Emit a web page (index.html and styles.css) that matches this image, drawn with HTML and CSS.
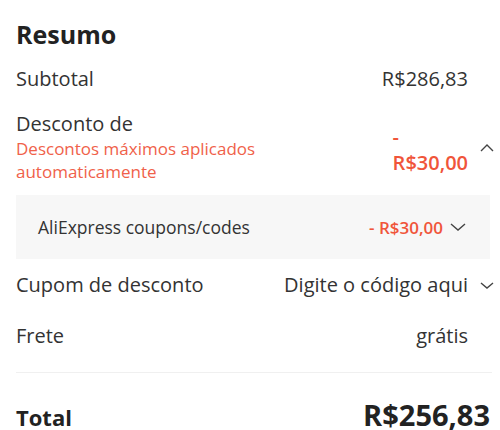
FILE: index.html
```html
<!DOCTYPE html>
<html lang="pt-BR">
<head>
    <meta charset="UTF-8">
    <title>Resumo</title>
    <link rel="stylesheet" href="styles.css">
</head>
<body>
    <div class="summary">
        <h2 class="title">Resumo</h2>

        <div class="row">
            <span class="label">Subtotal</span>
            <span class="value">R$286,83</span>
        </div>

        <div class="row discount">
            <div class="label">
                Desconto de
                <div class="hint">Descontos máximos aplicados automaticamente</div>
            </div>
            <div class="value red big">
                <span>-</span>
                <span>R$30,00</span>
            </div>
            <svg class="chev up" viewBox="0 0 14 8"><path d="M1 7L7 1L13 7"/></svg>
        </div>

        <!-- cupons aplicados -->
        <div class="coupons">
            <span class="label">AliExpress coupons/codes</span>
            <span class="value red">- R$30,00</span>
            <svg class="chev" viewBox="0 0 16 8"><path d="M1 1L8 7L15 1"/></svg>
        </div>

        <div class="row">
            <span class="label">Cupom de desconto</span>
            <span class="value">Digite o código aqui</span>
            <svg class="chev small" viewBox="0 0 14 7"><path d="M1 1L7 6L13 1"/></svg>
        </div>

        <div class="row">
            <span class="label">Frete</span>
            <span class="value">grátis</span>
        </div>

        <div class="total">
            <span>Total</span>
            <span class="total-value">R$256,83</span>
        </div>
    </div>
</body>
</html>
```

FILE: styles.css
```css
body {
    margin: 0;
    padding: 0;
    background: #fff;
    font-family: "Open Sans", sans-serif;
    color: #333;
}
.summary {
    padding: 18px 8px 0 16px;
}
.title {
    margin: 0 0 15px;
    font-size: 25px;
    font-weight: 700;
    color: #222;
    line-height: 32px;
}
.row {
    display: flex;
    align-items: center;
    font-size: 20px;
    line-height: 28px;
    padding-right: 24px;
    position: relative;
    margin-bottom: 23px;
}
.row .label {
    flex: 1;
}
.row .value {
    text-align: right;
}
.discount {
    align-items: flex-start;
    margin-top: -5px;
    line-height: 26px;
    margin-bottom: 12px;
}
.hint {
    color: #f0614a;
    font-size: 17px;
    line-height: 23px;
    width: 260px;
}
.red {
    color: #f0553a;
}
.big {
    display: flex;
    flex-direction: column;
    align-items: flex-start;
    padding-top: 13px;
    font-weight: 600;
}
.chev {
    width: 16px;
    height: 8px;
    fill: none;
    stroke: #444;
    stroke-width: 1.4;
}
.row .chev {
    position: absolute;
    right: -2px;
}
.chev.up {
    width: 14px;
    top: 33px;
}
.chev.small {
    width: 14px;
    height: 7px;
}
.coupons {
    display: flex;
    align-items: center;
    background: #f7f7f7;
    height: 64px;
    margin-right: 2px;
    padding: 0 24px 0 22px;
    margin-bottom: 12px;
    font-size: 17.5px;
}
.coupons .label {
    flex: 1;
}
.coupons .value {
    margin-right: 7px;
    font-size: 17px;
    font-weight: 600;
}
.total {
    display: flex;
    justify-content: space-between;
    align-items: baseline;
    border-top: 1px solid #f0f0f0;
    margin-top: -1px;
    padding: 29px 2px 0 0;
    font-size: 22px;
    line-height: 26px;
    font-weight: 700;
    color: #222;
}
.total-value {
    font-size: 29px;
}
```
